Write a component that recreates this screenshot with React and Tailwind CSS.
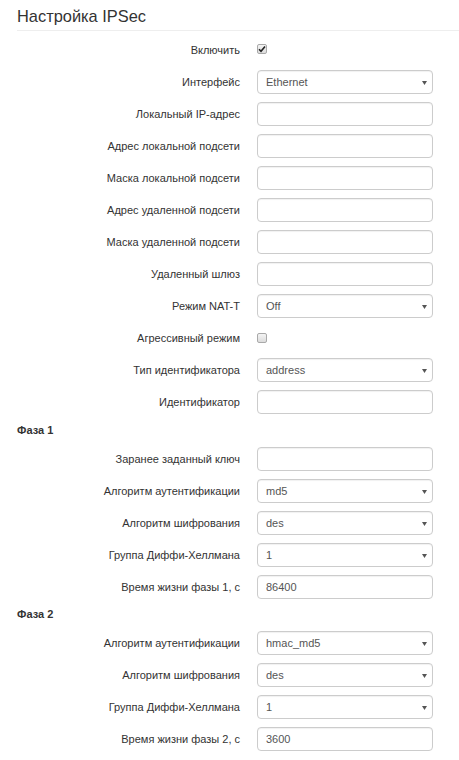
import { useState } from "react";

const font = { fontFamily: '"Liberation Sans", Arial, sans-serif' };

const Caret = () => (
  <svg
    className="absolute right-[5px] top-[10px] pointer-events-none"
    width="5"
    height="4"
    viewBox="0 0 5 4"
  >
    <path d="M0 0 L5 0 L2.5 4 Z" fill="#555" />
  </svg>
);

const Check = ({ checked }) => (
  <span className="inline-flex w-[10px] h-[10px] rounded-[2px] border border-[#a9a9a9] bg-gradient-to-b from-[#f4f4f4] to-[#dcdcdc] items-center justify-center">
    {checked && (
      <svg width="8" height="8" viewBox="0 0 8 8">
        <path
          d="M1 4.2 L3 6.2 L7 1.4"
          stroke="#222"
          strokeWidth="1.6"
          fill="none"
        />
      </svg>
    )}
  </span>
);

const Row = ({ label, children }) => (
  <div className="flex items-center h-[24px]">
    <div className="w-[223px] text-right text-[11px] text-[#333] whitespace-nowrap">
      {label}
    </div>
    <div className="ml-[17px] w-[176px] h-[24px] flex items-center">
      {children}
    </div>
  </div>
);

const TextInput = ({ value }) => (
  <div className="w-full h-[24px] border border-[#ccc] rounded-[4px] bg-white text-[11px] text-[#555] pl-[8px] flex items-center shadow-[inset_0_1px_1px_rgba(0,0,0,0.06)]">
    {value}
  </div>
);

const Select = ({ value }) => (
  <div className="relative w-full h-[24px] border border-[#ccc] rounded-[4px] bg-white text-[11px] text-[#555] pl-[8px] flex items-center shadow-[inset_0_1px_1px_rgba(0,0,0,0.06)]">
    {value}
    <Caret />
  </div>
);

const PhaseTitle = ({ children }) => (
  <div className="h-[17px] flex items-center text-[11px] font-bold text-[#333]">
    {children}
  </div>
);

const App = () => {
  const [enabled] = useState(true);

  return (
    <div className="w-[459px] h-[760px] bg-white overflow-hidden" style={font}>
      <div className="pl-[17px] pt-[6px]">
        <h2 className="text-[16.4px] text-[#333] leading-[16px] pt-[2px] pb-[6px]">
          Настройка IPSec
        </h2>
        <div className="h-px bg-[#eee] mr-[-20px]" />

        <div className="flex flex-col gap-[8px] mt-[7px]">
          <Row label="Включить">
            <span className="-mt-[3px] flex">
              <Check checked={enabled} />
            </span>
          </Row>
          <Row label="Интерфейс">
            <Select value="Ethernet" />
          </Row>
          <Row label="Локальный IP-адрес">
            <TextInput />
          </Row>
          <Row label="Адрес локальной подсети">
            <TextInput />
          </Row>
          <Row label="Маска локальной подсети">
            <TextInput />
          </Row>
          <Row label="Адрес удаленной подсети">
            <TextInput />
          </Row>
          <Row label="Маска удаленной подсети">
            <TextInput />
          </Row>
          <Row label="Удаленный шлюз">
            <TextInput />
          </Row>
          <Row label="Режим NAT-T">
            <Select value="Off" />
          </Row>
          <Row label="Агрессивный режим">
            <Check checked={false} />
          </Row>
          <Row label="Тип идентификатора">
            <Select value="address" />
          </Row>
          <Row label="Идентификатор">
            <TextInput />
          </Row>

          <PhaseTitle>Фаза 1</PhaseTitle>
          <Row label="Заранее заданный ключ">
            <TextInput />
          </Row>
          <Row label="Алгоритм аутентификации">
            <Select value="md5" />
          </Row>
          <Row label="Алгоритм шифрования">
            <Select value="des" />
          </Row>
          <Row label="Группа Диффи-Хеллмана">
            <Select value="1" />
          </Row>
          <Row label="Время жизни фазы 1, с">
            <TextInput value="86400" />
          </Row>

          <div className="-mt-[1px]">
            <PhaseTitle>Фаза 2</PhaseTitle>
          </div>
          <Row label="Алгоритм аутентификации">
            <Select value="hmac_md5" />
          </Row>
          <Row label="Алгоритм шифрования">
            <Select value="des" />
          </Row>
          <Row label="Группа Диффи-Хеллмана">
            <Select value="1" />
          </Row>
          <Row label="Время жизни фазы 2, с">
            <TextInput value="3600" />
          </Row>
        </div>
      </div>
    </div>
  );
};

export default App;
